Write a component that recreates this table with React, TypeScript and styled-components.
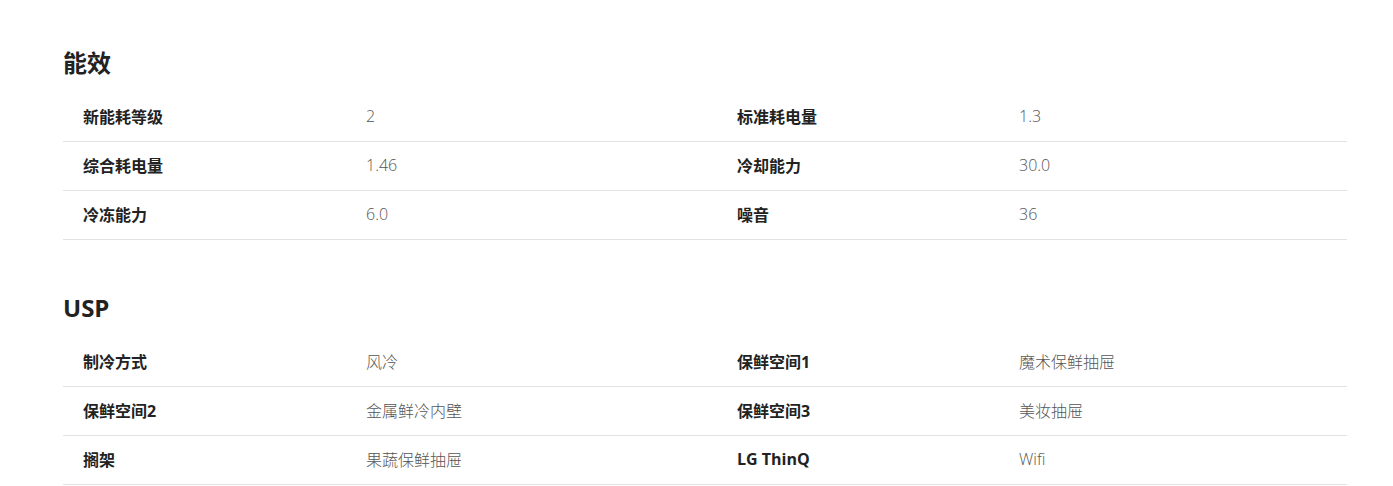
import React from "react";
import styled, { createGlobalStyle } from "styled-components";

interface SpecItem {
  label: string;
  value: string;
}

interface SpecSection {
  title: string;
  items: SpecItem[];
}

const sections: SpecSection[] = [
  {
    title: "能效",
    items: [
      { label: "新能耗等级", value: "2" },
      { label: "标准耗电量", value: "1.3" },
      { label: "综合耗电量", value: "1.46" },
      { label: "冷却能力", value: "30.0" },
      { label: "冷冻能力", value: "6.0" },
      { label: "噪音", value: "36" },
    ],
  },
  {
    title: "USP",
    items: [
      { label: "制冷方式", value: "风冷" },
      { label: "保鲜空间1", value: "魔术保鲜抽屉" },
      { label: "保鲜空间2", value: "金属鲜冷内壁" },
      { label: "保鲜空间3", value: "美妆抽屉" },
      { label: "搁架", value: "果蔬保鲜抽屉" },
      { label: "LG ThinQ", value: "Wifi" },
    ],
  },
];

// pairs of items go on one row: left pair, right pair
function toRows(items: SpecItem[]) {
  const rows: SpecItem[][] = [];
  for (let i = 0; i < items.length; i += 2) {
    rows.push(items.slice(i, i + 2));
  }
  return rows;
}

export default function App() {
  return (
    <>
      <GlobalStyle />
      <StPage>
        {sections.map((section) => (
          <StSection key={section.title}>
            <StTitle>{section.title}</StTitle>
            <StTable>
              {toRows(section.items).map((row, idx) => (
                <StRow key={idx}>
                  {row.map((item) => (
                    <React.Fragment key={item.label}>
                      <StLabel>{item.label}</StLabel>
                      <StValue>{item.value}</StValue>
                    </React.Fragment>
                  ))}
                </StRow>
              ))}
            </StTable>
          </StSection>
        ))}
      </StPage>
    </>
  );
}

const GlobalStyle = createGlobalStyle`
  body {
    margin: 0;
    background: #fff;
    font-family: "Open Sans", "Noto Sans CJK SC", sans-serif;
  }
`;

const StPage = styled.div`
  padding: 50px 46px 0 63px;
  display: flex;
  flex-direction: column;
  gap: 55px;
`;

const StSection = styled.section`
  display: flex;
  flex-direction: column;
  gap: 17px;
`;

const StTitle = styled.h2`
  margin: 0;
  font-size: 24px;
  line-height: 26px;
  font-weight: 700;
  color: #222;
`;

const StTable = styled.div`
  display: flex;
  flex-direction: column;
`;

const StRow = styled.div`
  display: grid;
  grid-template-columns: 303px 351px 302px 1fr;
  align-items: center;
  box-sizing: border-box;
  height: 49px;
  padding-bottom: 2px;
  border-bottom: 1px solid #e2e2e2;
`;

const StLabel = styled.div`
  padding-left: 20px;
  font-size: 16px;
  font-weight: 700;
  color: #222;
`;

const StValue = styled.div`
  font-size: 16px;
  font-weight: 300;
  color: #555;
`;
